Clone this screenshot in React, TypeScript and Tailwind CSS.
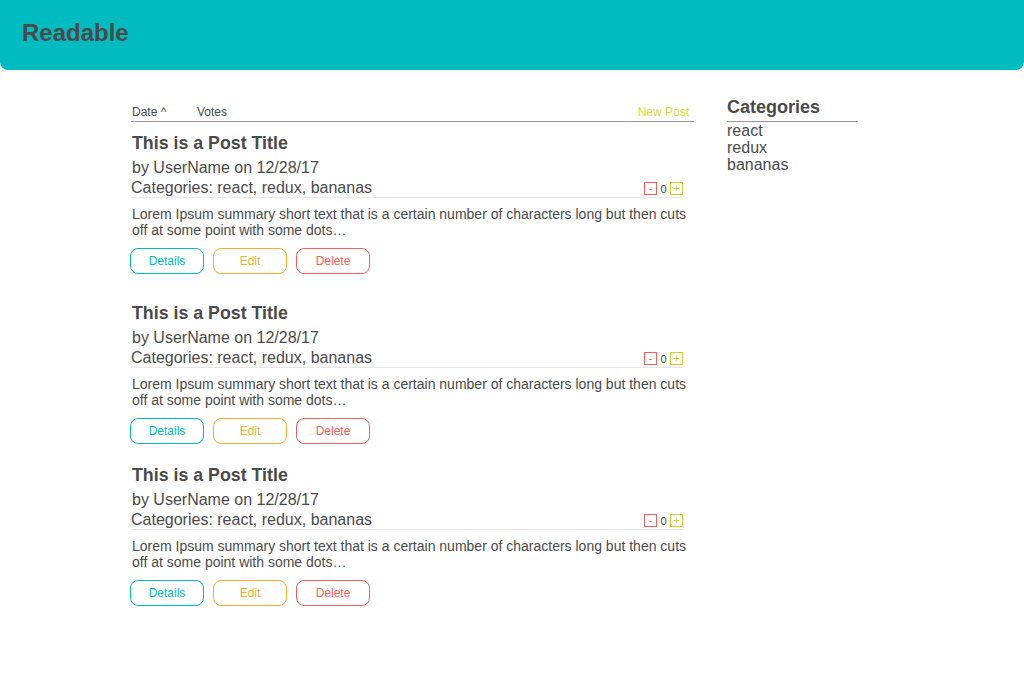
import React from "react";

const posts = [{ mt: "mt-[10px]" }, { mt: "mt-[28px]" }, { mt: "mt-[20px]" }];

function Post({ mt }: { mt: string }) {
  return (
    <div className={mt}>
      <h2 className="pl-[1px] text-[17.8px] font-bold leading-[22px]">This is a Post Title</h2>
      <div className="mt-[4px] pl-[1px] text-[16px] leading-[20px]">by UserName on 12/28/17</div>
      <div className="mr-[11px] flex items-end justify-between border-b border-[#e6e6e6] text-[16px] leading-[19px]">
        <span>Categories: react, redux, bananas</span>
        <div className="mb-[2px] flex items-center text-[11px] leading-[12px]">
          <span className="flex h-[13px] w-[13px] items-center justify-center border border-[#ff5a5a] text-[11px] leading-none text-[#ff5a5a]">-</span>
          <span className="mx-[3px] w-[7px] text-center text-[#4a4a4a]">0</span>
          <span className="flex h-[13px] w-[13px] items-center justify-center border border-[#c9d12a] text-[11px] leading-none text-[#c9d12a]">+</span>
        </div>
      </div>
      <p className="mt-[8px] pl-[1px] pr-[4px] text-[14px] leading-[16px]">
        Lorem Ipsum summary short text that is a certain number of characters long but then cuts off at some point with some dots…
      </p>
      <div className="ml-[-1px] mt-[10px] flex gap-[9px] text-[12px]">
        <button className="h-[26px] w-[74px] rounded-lg border border-[#00bcc0] text-[#00bcc0]">Details</button>
        <button className="h-[26px] w-[74px] rounded-lg border border-[#f8ad2e] text-[#f8ad2e]">Edit</button>
        <button className="h-[26px] w-[74px] rounded-lg border border-[#ff5a5a] text-[#ff5a5a]">Delete</button>
      </div>
    </div>
  );
}

export default function App() {
  return (
    <div className="min-h-[694px] bg-white font-['Liberation_Sans',Arial,sans-serif] text-[#4a4a4a]">
      <header className="flex h-[70px] items-center rounded-b-lg bg-[#00bcc0] px-[22px]">
        <h1 className="mt-[-4px] text-[24px] font-bold leading-[28px] text-[#4a4a4a]">Readable</h1>
      </header>
      <div className="flex pl-[131px] pt-[25px]">
        <main className="mt-[9px] w-[563px]">
          <div className="flex border-b border-[#979797] pb-[2px] pl-[1px] pr-[5px] pt-[1px] text-[12px] leading-[14px]">
            <span className="w-[65px]">Date ^</span>
            <span>Votes</span>
            <span className="ml-auto text-[#d4dc3a]">New Post</span>
          </div>
          {posts.map((p, i) => (
            <Post key={i} mt={p.mt} />
          ))}
        </main>
        <aside className="ml-[33px] w-[131px]">
          <h3 className="border-b border-[#979797] pb-[3px] pt-[1px] text-[18px] font-bold leading-[22px]">Categories</h3>
          <ul className="text-[16px] leading-[17px]">
            <li>react</li>
            <li>redux</li>
            <li>bananas</li>
          </ul>
        </aside>
      </div>
    </div>
  );
}
